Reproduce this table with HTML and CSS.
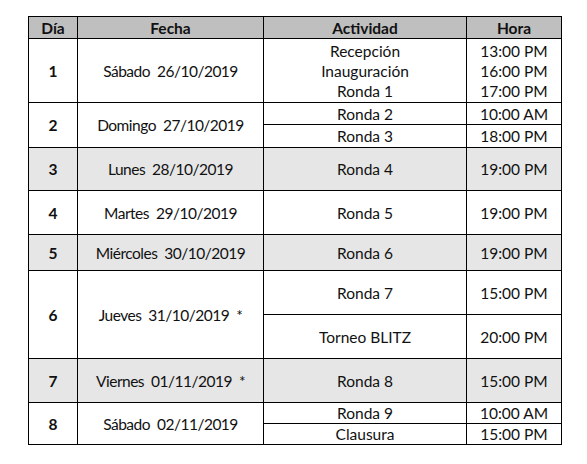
FILE: index.html
```html
<!DOCTYPE html>
<html lang="es">
<head>
<meta charset="utf-8">
<title>Calendario</title>
<link rel="stylesheet" href="styles.css">
</head>
<body>
<div class="schedule">
  <div class="cell head">Día</div>
  <div class="cell head">Fecha</div>
  <div class="cell head">Actividad</div>
  <div class="cell head">Hora</div>

  <div class="cell day">1</div>
  <div class="cell date">Sábado  26/10/2019</div>
  <div class="cell stack"><span>Recepción</span><span>Inauguración</span><span>Ronda 1</span></div>
  <div class="cell stack"><span>13:00 PM</span><span>16:00 PM</span><span>17:00 PM</span></div>

  <div class="cell day span2">2</div>
  <div class="cell date span2">Domingo  27/10/2019</div>
  <div class="cell">Ronda 2</div>
  <div class="cell">10:00 AM</div>
  <div class="cell">Ronda 3</div>
  <div class="cell">18:00 PM</div>

  <div class="cell day shade">3</div>
  <div class="cell date shade">Lunes  28/10/2019</div>
  <div class="cell shade">Ronda 4</div>
  <div class="cell shade">19:00 PM</div>

  <div class="cell day">4</div>
  <div class="cell date">Martes  29/10/2019</div>
  <div class="cell">Ronda 5</div>
  <div class="cell">19:00 PM</div>

  <div class="cell day shade">5</div>
  <div class="cell date shade">Miércoles  30/10/2019</div>
  <div class="cell shade">Ronda 6</div>
  <div class="cell shade">19:00 PM</div>

  <div class="cell day span2">6</div>
  <div class="cell date span2">Jueves  31/10/2019  *</div>
  <div class="cell">Ronda 7</div>
  <div class="cell">15:00 PM</div>
  <div class="cell">Torneo BLITZ</div>
  <div class="cell">20:00 PM</div>

  <div class="cell day shade">7</div>
  <div class="cell date shade">Viernes  01/11/2019  *</div>
  <div class="cell shade">Ronda 8</div>
  <div class="cell shade">15:00 PM</div>

  <div class="cell day span2">8</div>
  <div class="cell date span2">Sábado  02/11/2019</div>
  <div class="cell">Ronda 9</div>
  <div class="cell">10:00 AM</div>
  <div class="cell">Clausura</div>
  <div class="cell">15:00 PM</div>
</div>
</body>
</html>
```
FILE: styles.css
```css
html, body {
  margin: 0;
  padding: 0;
  background: #ffffff;
}

body {
  font-family: "Lato", "Open Sans", sans-serif;
  font-size: 15.5px;
  color: #111111;
}

.schedule {
  display: grid;
  grid-template-columns: 48px 185px 202px 94px;
  grid-template-rows: 21px 63px 21px 22px 42px 43px 35px 43px 43px 43px 20px 20px;
  gap: 1px;
  padding: 1px;
  background: #000000;
  width: fit-content;
  margin: 16px 0 0 28px;
}

.cell {
  background: #ffffff;
  display: flex;
  align-items: center;
  justify-content: center;
  white-space: pre;
  line-height: 20px;
}

.head {
  background: #bfbfbf;
  font-weight: 700;
}

.day {
  font-weight: 700;
}

.date {
  letter-spacing: -0.5px;
}

.shade {
  background: #e6e6e6;
}

.span2 {
  grid-row: span 2;
}

.stack {
  flex-direction: column;
}
```
